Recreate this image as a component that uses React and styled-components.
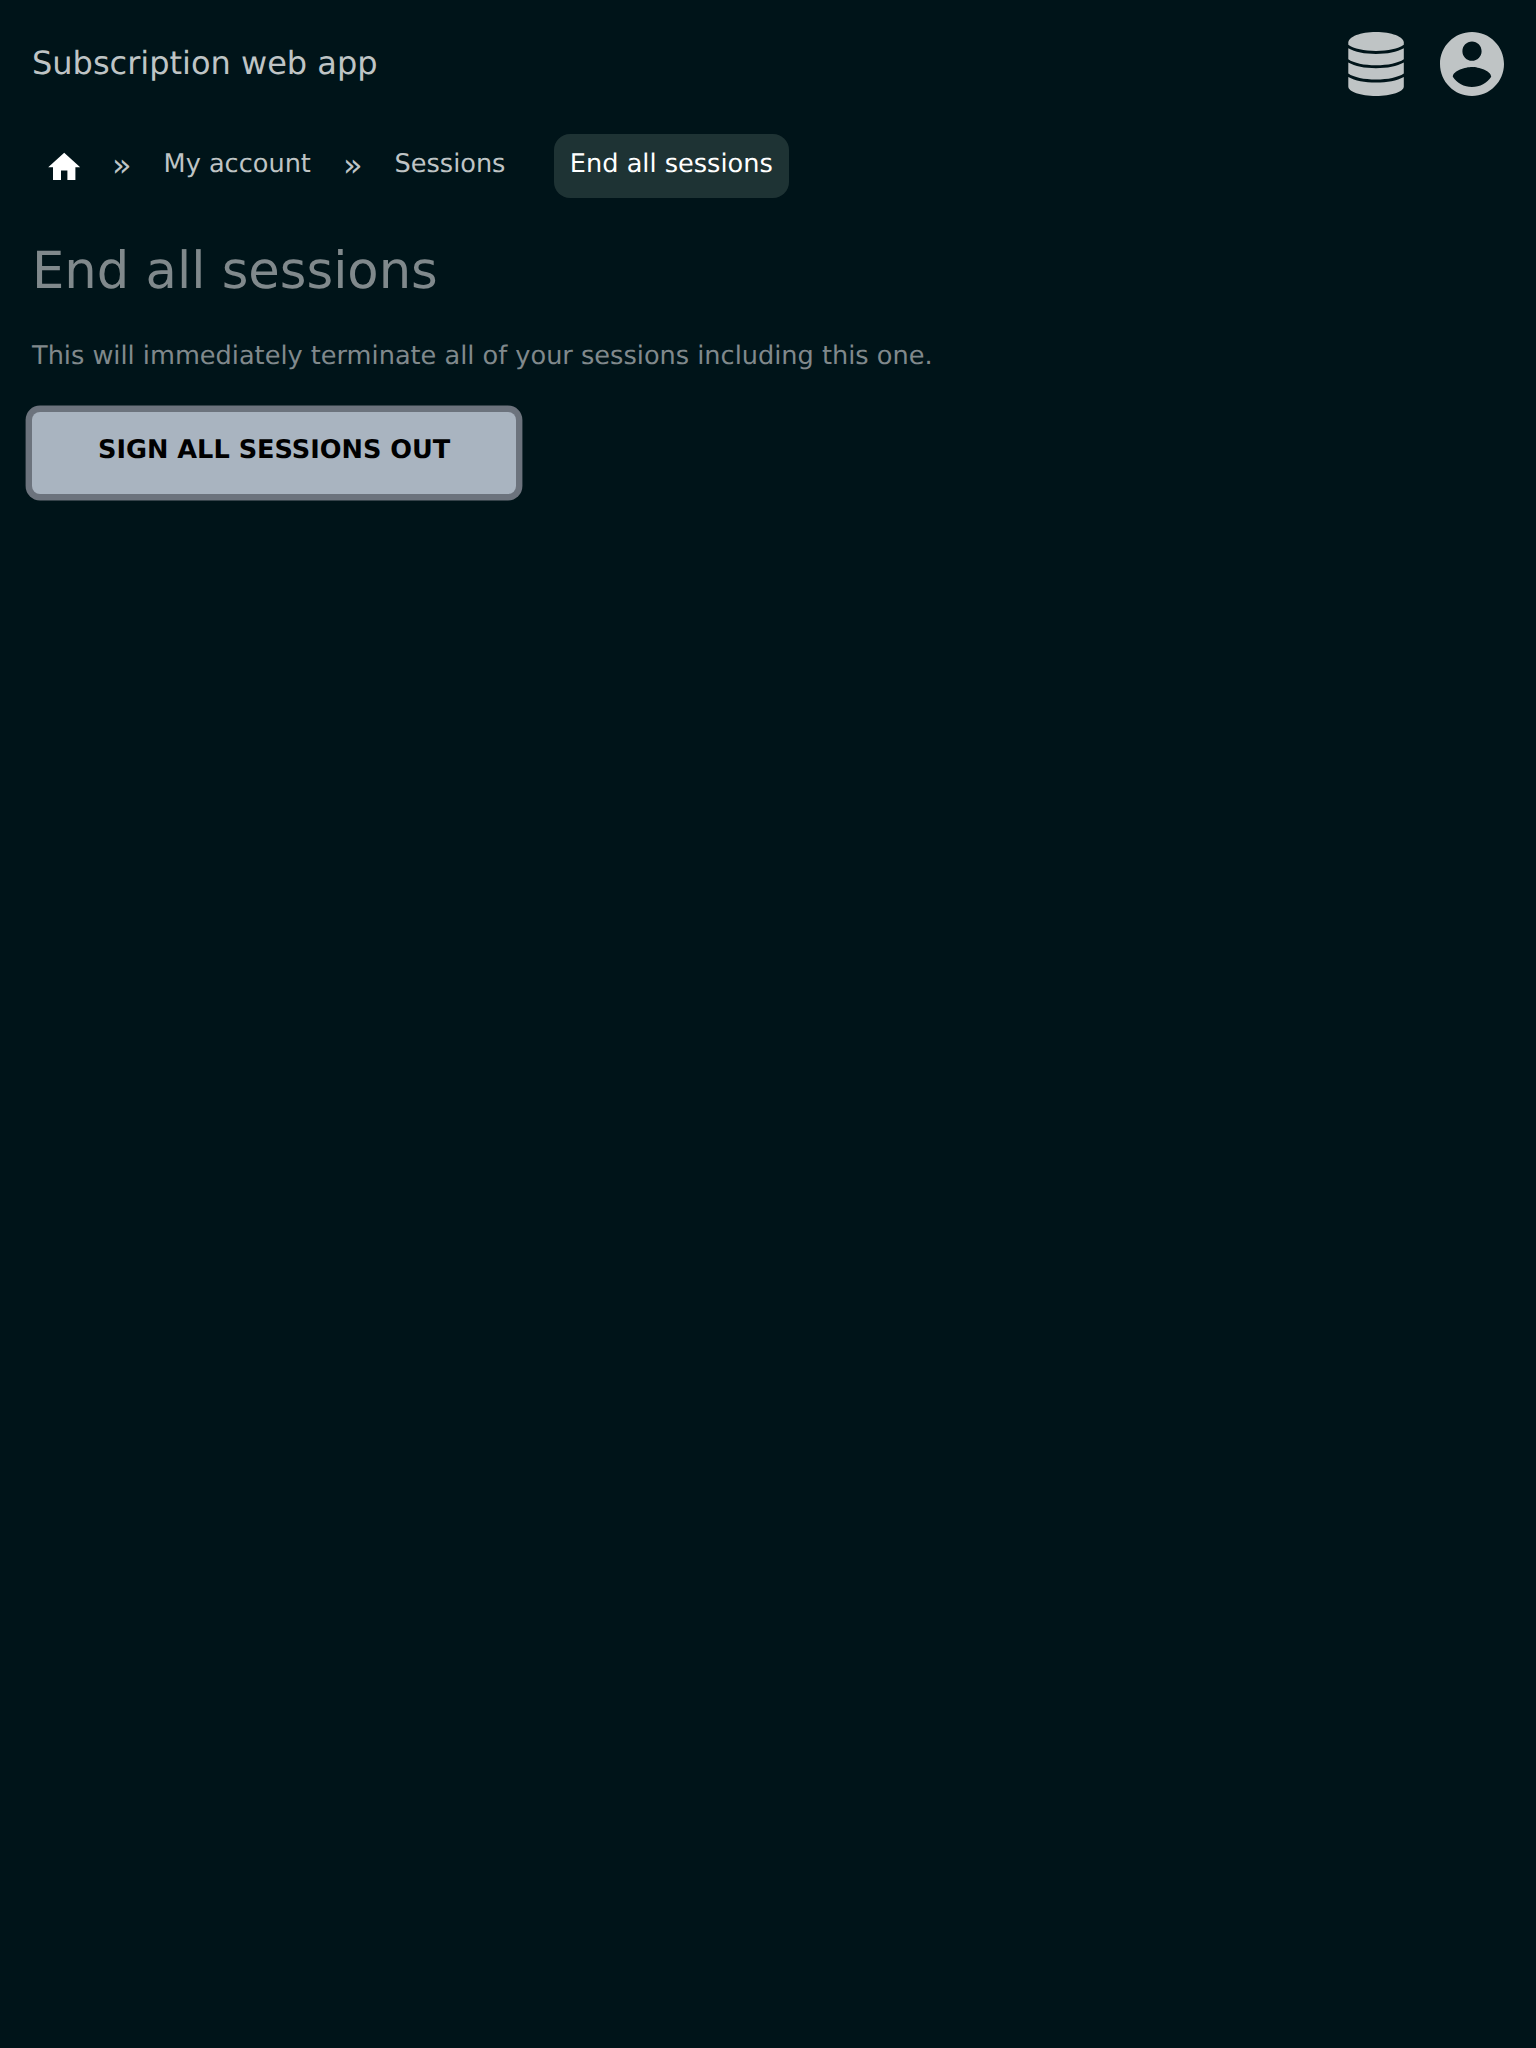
import React from "react";
import styled, { createGlobalStyle } from "styled-components";

const GlobalStyle = createGlobalStyle`
  html { font-size: 25.6px; }
  body {
    margin: 0;
    min-height: 2048px;
    background: #001419;
    color: #80898c;
    font-family: "DejaVu Sans", sans-serif;
    text-rendering: geometricPrecision;
  }
`;

const Header = styled.header`
  display: flex;
  align-items: flex-start;
  justify-content: space-between;
  height: 64px;
  padding: 32px 32px 38px;
`;

const Brand = styled.a`
  color: #bfc4c5;
  font-size: 32px;
  line-height: 62px;
`;

const Actions = styled.nav`
  display: flex;
  gap: 36px;
  color: #bfc4c5;
`;

const Icon = styled.svg`
  display: block;
  width: ${(p) => p.$w}px;
  height: ${(p) => p.$h}px;
  fill: currentColor;
`;

const Breadcrumbs = styled.nav`
  display: flex;
  height: 64px;
  padding: 0 32px;
`;

const Crumb = styled.a`
  box-sizing: border-box;
  height: 64px;
  padding: 0 16px;
  border-radius: 16px;
  line-height: 60px;
  color: ${(p) => (p.$current ? "#ffffff" : "#bfc4c5")};
  background: ${(p) => (p.$current ? "#1e3334" : "transparent")};
  margin-left: ${(p) => (p.$current ? 32.4 : 0)}px;
`;

const HomeCrumb = styled.a`
  display: flex;
  align-items: center;
  padding: 2px 12.8px 0;
  color: #ffffff;
`;

const Separator = styled.span`
  padding: 0 16px;
  font-size: 32px;
  line-height: 62px;
  color: #bfc4c5;
`;

const Main = styled.main`
  padding: 43px 32px 0;
`;

const Title = styled.h1`
  margin: 0;
  font-size: 51.2px;
  font-weight: 400;
  line-height: 60px;
`;

const Text = styled.p`
  margin: 39px 0 0;
  line-height: 32px;
`;

const Button = styled.button`
  display: block;
  margin: 40px 0 0;
  width: 484.3px;
  height: 82px;
  padding: 0 66px 6px;
  border: 0;
  border-radius: 8px;
  box-shadow: 0 0 0 6.4px #6c737d;
  background: #a9b4c0;
  color: #000;
  font: bold 25.6px "DejaVu Sans", sans-serif;
  text-rendering: inherit;
  text-align: left;
  text-transform: uppercase;
  white-space: nowrap;
`;

const DatabaseIcon = () => (
  <Icon $w={56} $h={64} viewBox="0 0 56 64">
    <path d="M28 0C43.400 0 55.800 4.800 55.800 10.500V12.700C50 16.700 40 18.900 28 18.900S5.900 16.700 .3 12.700V10.500C.3 4.800 12.600 0 28 0Z" />
    <path d="M.3 16.200C7 20 16.600 21.900 28 21.900S48.900 20 55.800 16.200V27.200C50 31.100 40 33.200 28 33.200S5.900 31.100 .3 27.200Z" />
    <path d="M.3 30.500C7 34.300 16.600 36.200 28 36.200S48.900 34.300 55.800 30.500V41.600C50 45.500 40 47.600 28 47.600S5.900 45.500 .3 41.600Z" />
    <path d="M.3 44.900C7 48.700 16.600 50.500 28 50.500S48.900 48.700 55.800 44.900V54.500C55.800 59.700 43.400 64 28 64S.3 59.700 .3 54.500Z" />
  </Icon>
);

const AccountIcon = () => (
  <Icon $w={64} $h={64} viewBox="2 2 20 20">
    <path d="M12 2C6.480 2 2 6.480 2 12s4.480 10 10 10 10-4.480 10-10S17.520 2 12 2zm0 3c1.660 0 3 1.340 3 3s-1.340 3-3 3-3-1.340-3-3 1.340-3 3-3zm0 14.200c-2.500 0-4.710-1.280-6-3.220.030-1.990 4-3.080 6-3.080 1.990 0 5.970 1.090 6 3.080-1.290 1.940-3.500 3.220-6 3.220z" />
  </Icon>
);

const HomeIcon = () => (
  <Icon $w={38.4} $h={38.4} viewBox="0 0 24 24">
    <path d="M10 20v-6h4v6h5v-8h3L12 3 2 12h3v8z" />
  </Icon>
);

export default function App() {
  return (
    <>
      <GlobalStyle />
      <Header>
        <Brand>Subscription web app</Brand>
        <Actions>
          <DatabaseIcon />
          <AccountIcon />
        </Actions>
      </Header>
      <Breadcrumbs>
        <HomeCrumb><HomeIcon /></HomeCrumb>
        <Separator>»</Separator>
        <Crumb>My account</Crumb>
        <Separator>»</Separator>
        <Crumb>Sessions</Crumb>
        <Crumb $current>End all sessions</Crumb>
      </Breadcrumbs>
      <Main>
        <Title>End all sessions</Title>
        <Text>This will immediately terminate all of your sessions including this one.</Text>
        <Button>Sign all sessions out</Button>
      </Main>
    </>
  );
}
